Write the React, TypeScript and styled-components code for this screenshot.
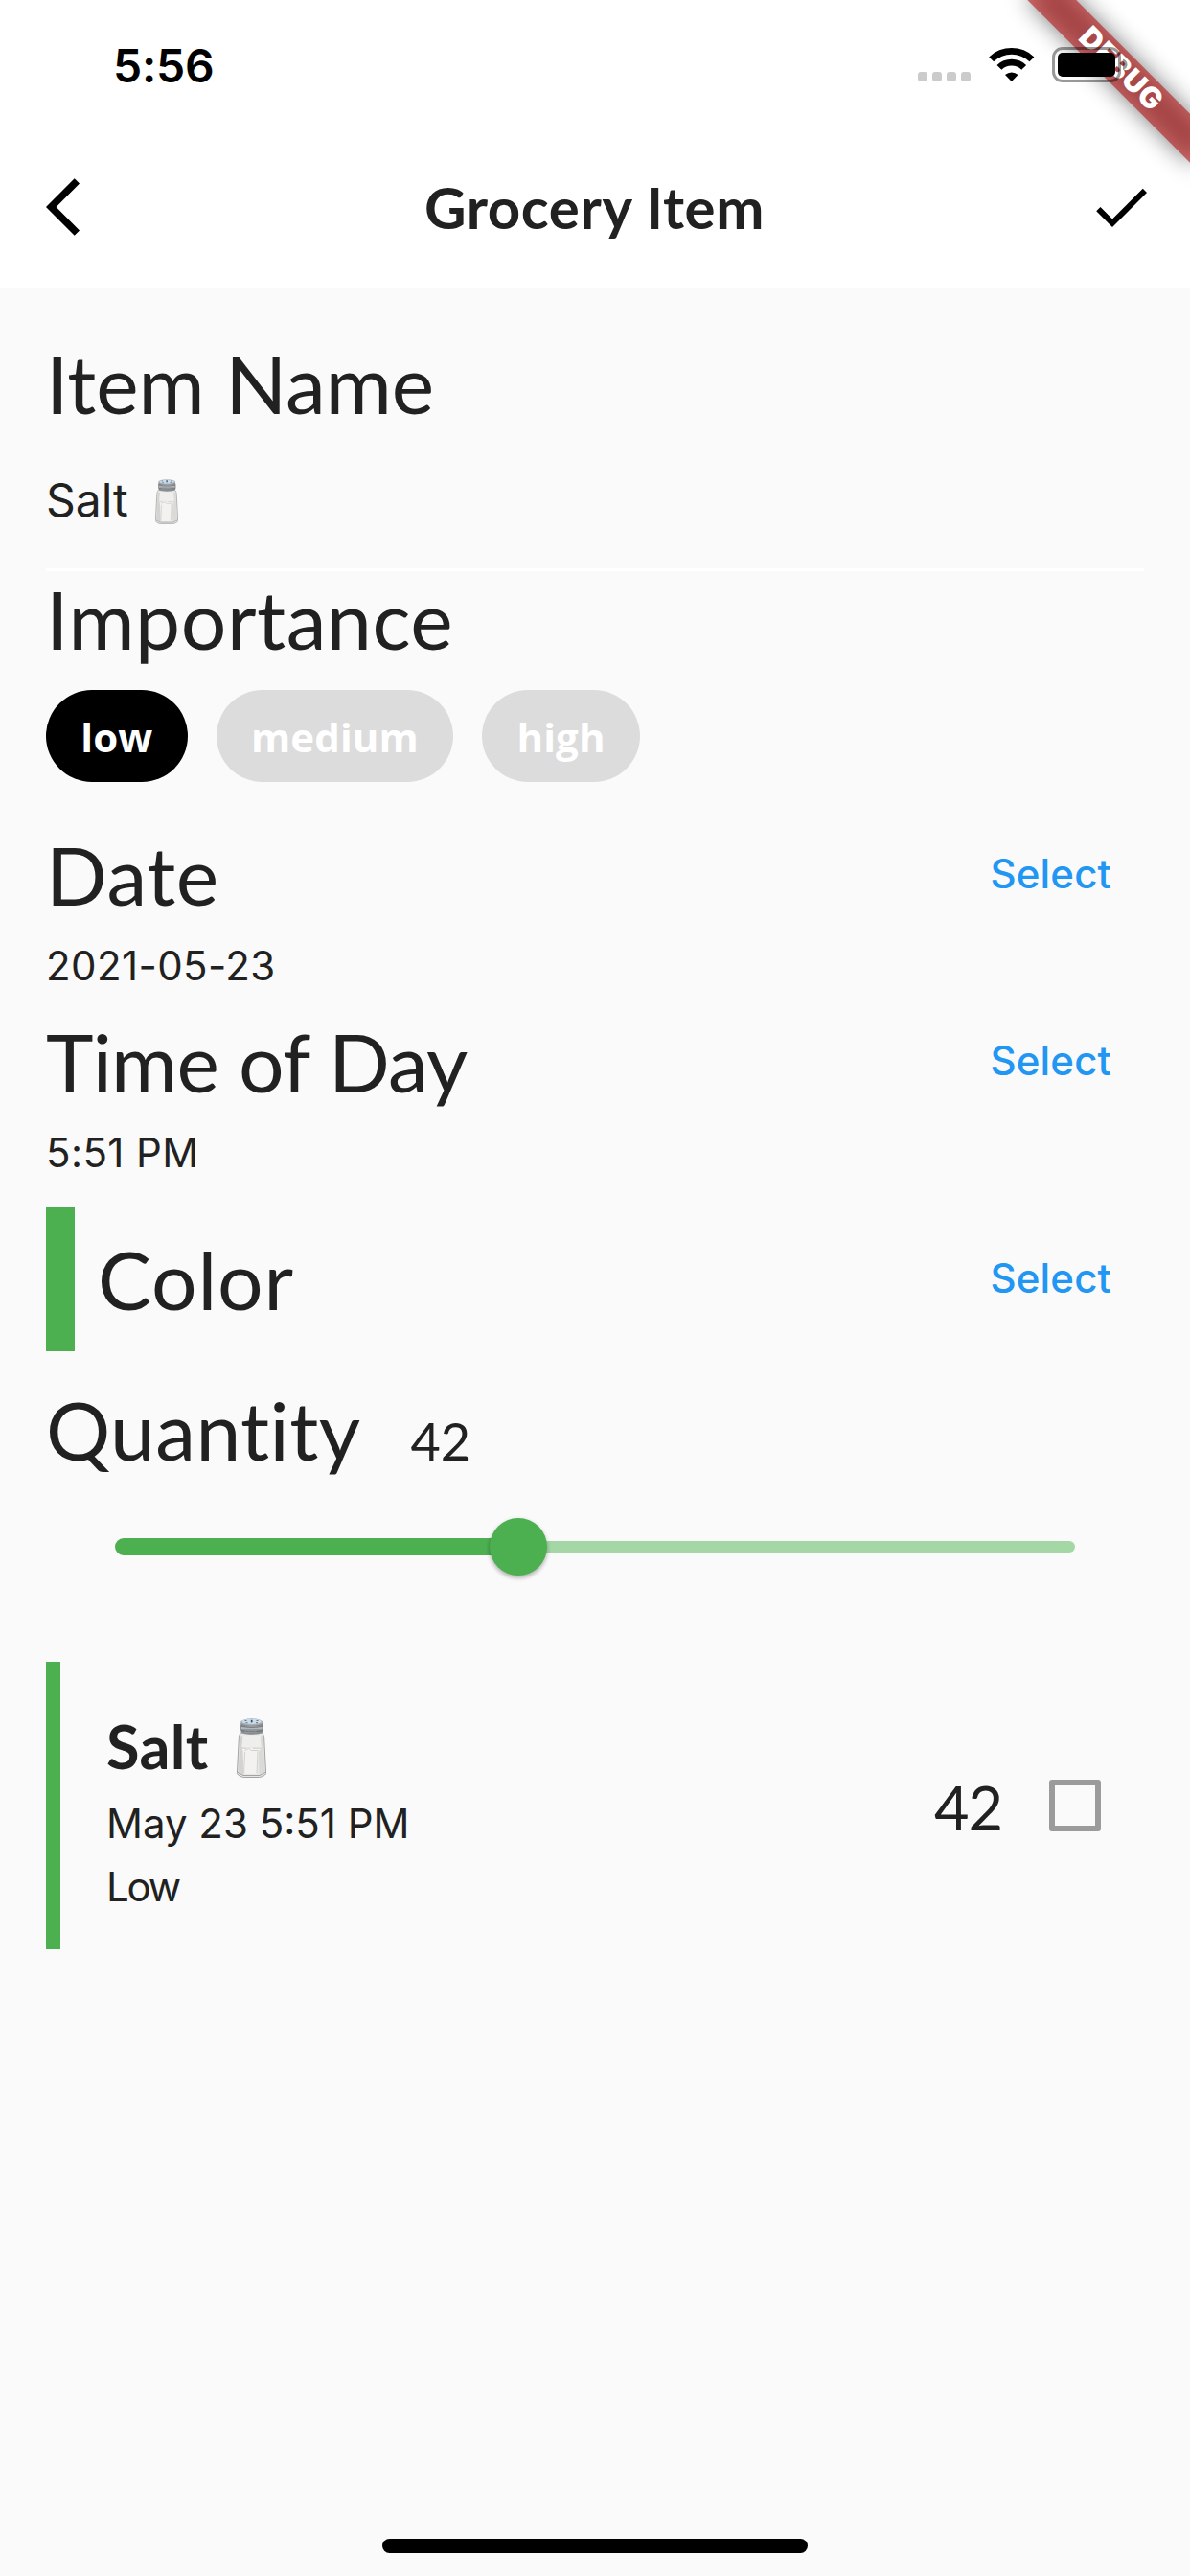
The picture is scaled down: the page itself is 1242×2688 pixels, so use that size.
import React, { useState } from 'react';
import styled, { createGlobalStyle } from 'styled-components';

const GREEN = '#4caf50';
const INK = '#212121';
const heading = `"Lato", "Open Sans", sans-serif`;
const system = `"Inter", "Roboto", sans-serif`;

const GlobalStyle = createGlobalStyle`
  *, *::before, *::after { box-sizing: border-box; }
  body { margin: 0; background: #fafafa; }
  button { border: 0; padding: 0; background: none; cursor: pointer; }
`;

const Screen = styled.div`
  position: relative;
  display: flex;
  flex-direction: column;
  width: 1242px;
  height: 2688px;
  overflow: hidden;
  background: #fafafa;
  color: ${INK};
  font-family: ${system};
`;

const Header = styled.header`
  height: 300px;
  background: #fff;
`;

const StatusBar = styled.div`
  position: relative;
  z-index: 2;
  display: flex;
  justify-content: space-between;
  height: 132px;
  padding: 0 65px 0 118px;
`;

const Clock = styled.span`
  color: #000;
  font-size: 48px;
  font-weight: 600;
  line-height: 58px;
  padding-top: 40px;
  letter-spacing: -0.2px;
`;

const StatusIcons = styled.div`
  display: flex;
  align-items: flex-start;
  padding-top: 49px;
`;

const SignalDots = styled.div`
  display: flex;
  gap: 5px;
  margin: 26px 19px 0 0;
`;

const SignalDot = styled.i`
  width: 10px;
  height: 10px;
  border-radius: 3px;
  background: #cbcbcb;
`;

const WifiIcon = styled.svg`
  width: 48px;
  height: 37px;
  margin-right: 18px;
`;

const BatteryIcon = styled.svg`
  width: 79px;
  height: 37px;
`;

const NavBar = styled.nav`
  display: grid;
  grid-template-columns: 72px 1fr 72px;
  align-items: center;
  height: 168px;
  padding: 0 36px 0 48px;
`;

const NavIcon = styled.svg`
  display: block;
  width: 72px;
  height: 72px;
  fill: #000;
`;

const NavTitle = styled.h1`
  margin: 0 13px 0 0;
  text-align: center;
  font-family: ${heading};
  font-size: 60px;
  font-weight: 700;
  line-height: 72px;
  letter-spacing: 0.6px;
`;

const BannerClip = styled.div`
  position: absolute;
  top: 0;
  right: 0;
  width: 300px;
  height: 300px;
  overflow: hidden;
  z-index: 1;
  pointer-events: none;
`;

const Banner = styled.div`
  position: absolute;
  top: 84px;
  left: 180px;
  width: 240px;
  height: 36px;
  transform-origin: 120px -84px;
  transform: rotate(45deg);

  &::before {
    content: '';
    position: absolute;
    inset: 0;
    background: rgba(0, 0, 0, 0.5);
    filter: blur(12px);
  }
`;

const BannerLabel = styled.div`
  position: relative;
  height: 36px;
  background: rgba(183, 28, 28, 0.627);
  color: #fff;
  font-size: 30.6px;
  font-weight: 900;
  line-height: 33px;
  letter-spacing: 0.5px;
  text-align: center;
`;

const Form = styled.main`
  display: flex;
  flex-direction: column;
  flex: 1;
  padding: 50px 48px 0;
`;

const Title = styled.h2<{ $spacing?: number }>`
  margin: 0;
  font-family: ${heading};
  font-size: 84px;
  font-weight: 400;
  line-height: 100px;
  letter-spacing: ${(p) => p.$spacing ?? 0}px;
  white-space: nowrap;
`;

const NameInput = styled.div`
  display: flex;
  align-items: center;
  height: 146px;
  border-bottom: 3px solid #fff;
  font-size: 48px;
  line-height: 60px;
  padding-top: 1px;
`;

const ShakerIcon = styled.svg<{ $w: number; $h: number; $left: number; $top: number }>`
  display: block;
  width: ${(p) => p.$w}px;
  height: ${(p) => p.$h}px;
  margin: ${(p) => p.$top}px 0 0 ${(p) => p.$left}px;
`;

const Chips = styled.div`
  display: flex;
  gap: 30px;
  margin: 24px 0 47px;
`;

const Chip = styled.button<{ $active: boolean }>`
  height: 96px;
  padding: 2px 36.3px 0;
  border-radius: 48px;
  background: ${(p) => (p.$active ? '#000' : '#dcdcdc')};
  color: #fff;
  font-family: "Open Sans", sans-serif;
  font-size: 42px;
  font-weight: 700;
  line-height: 94px;
  letter-spacing: 0.1px;
`;

const Row = styled.div`
  display: flex;
  align-items: center;
  justify-content: space-between;
`;

const Field = styled.section`
  margin-bottom: 25px;
`;

const FieldValue = styled.div`
  margin-top: 20px;
  font-size: 42px;
  line-height: 50px;
  letter-spacing: 0.4px;
`;

const SelectButton = styled.button`
  height: 100px;
  padding: 0 34px 4px 24px;
  color: #2196f3;
  font-family: ${system};
  font-size: 42px;
  font-weight: 500;
  letter-spacing: 0.15px;
`;

const ColorRow = styled(Row)`
  height: 150px;
  margin: 7px 0 32px;
`;

const ColorLabel = styled.div`
  display: flex;
  align-items: center;
  height: 100%;
  padding-left: 24px;
  border-left: 30px solid ${GREEN};
`;

const QuantityRow = styled.div`
  display: flex;
  align-items: baseline;
  gap: 52px;
  height: 100px;
`;

const QuantityValue = styled.span`
  font-family: ${heading};
  font-size: 54px;
  line-height: 65px;
`;

const Slider = styled.div`
  display: flex;
  align-items: center;
  height: 144px;
  margin-bottom: 48px;
  padding: 0 72px;
`;

const ActiveTrack = styled.div`
  height: 18px;
  border-radius: 9px 0 0 9px;
  background: ${GREEN};
`;

const Thumb = styled.div`
  flex: none;
  width: 60px;
  height: 60px;
  margin: 0 -30px;
  border-radius: 50%;
  background: ${GREEN};
  box-shadow: 0 3px 4px rgba(0, 0, 0, 0.22), 0 1px 5px rgba(0, 0, 0, 0.1);
  z-index: 1;
`;

const InactiveTrack = styled.div`
  flex: 1;
  height: 12px;
  border-radius: 0 6px 6px 0;
  background: #a4d6a6;
`;

const Tile = styled(Row)`
  height: 300px;
  padding: 0 45px 0 48px;
  border-left: 15px solid ${GREEN};
`;

const TileBody = styled.div`
  padding-top: 9px;
`;

const TileTitle = styled.div`
  display: flex;
  font-family: ${heading};
  font-size: 63px;
  font-weight: 700;
  line-height: 76px;
  letter-spacing: 0.3px;
`;

const TileText = styled.div<{ $top: number; $spacing?: number }>`
  margin-top: ${(p) => p.$top}px;
  font-size: 42px;
  line-height: 50px;
  letter-spacing: ${(p) => p.$spacing ?? 0}px;
`;

const TileEnd = styled.div`
  display: flex;
  align-items: center;
  gap: 49px;
`;

const TileCount = styled.span`
  padding-top: 4px;
  font-family: ${heading};
  font-size: 63px;
  line-height: 76px;
  letter-spacing: -1px;
`;

const Checkbox = styled.div`
  width: 54px;
  height: 54px;
  border: 6px solid #9b9b9b;
  border-radius: 3px;
`;

const HomeIndicator = styled.div`
  align-self: center;
  width: 444px;
  height: 15px;
  margin-bottom: 24px;
  border-radius: 8px;
  background: #000;
`;

type ShakerProps = { w: number; h: number; left: number; top: number };

function SaltShaker({ w, h, left, top }: ShakerProps) {
  return (
    <ShakerIcon viewBox="0 0 31 62" preserveAspectRatio="none" $w={w} $h={h} $left={left} $top={top} role="img" aria-label="salt shaker">
      <path d="M4.500 15h22c1.700 1.500 2 3.500 2.200 6L30.600 57.500c-1 2.300-4 3.400-7 4H7.500c-3-.6-6-1.800-7.100-4L2.300 21c.2-2.500.5-4.500 2.200-6z" fill="#e6e6e5" stroke="#a3a3a1" strokeWidth="1" />
      <path d="M3.600 19l-2 37 5.600 3L8.500 34 5.500 30l1-12z" fill="#d3d3d1" />
      <path d="M27.400 19l2 37-5.600 3L22.500 34l3-4-1-12z" fill="#dadad8" />
      <path d="M6.500 17.500h18l1 12.500h-20z" fill="#eeeeed" />
      <path d="M5 31h21l-3 3.500-1.500 23.500h-14L6.500 34z" fill="#f3f2ef" />
      <path d="M5 31.300h5.500M17 31.300h8.500M8.500 33.500l4-2 3 2h7M22 34l-1 23.500M8.600 35l-1 22.500" fill="none" stroke="#cbc9c4" strokeWidth=".8" />
      <path d="M1 56.500l6 3h17l6-3" fill="none" stroke="#a3a3a1" strokeWidth="1" />
      <path d="M4.300 5h22.900l.6 5-.6 4.500c-3 3-19.500 3-22.500 0L4 10z" fill="#878b8f" />
      <path d="M5 8.500h21.500v2.800H5z" fill="#b3b8bd" />
      <path d="M8 12.600h13v2H8z" fill="#a4a9ae" />
      <path d="M4.500 8c5 1.800 18 1.800 23 0M4.500 12.200c5 2 18 2 23 0" fill="none" stroke="#6d7175" strokeWidth=".9" />
      <ellipse cx="15.700" cy="4" rx="11.700" ry="3.700" fill="#a9adb2" />
      <ellipse cx="15.700" cy="3.400" rx="10.200" ry="2.700" fill="#c9dcee" />
      <path d="M8.500 2.500h2M20.500 2.500h2M9.500 4.700h2M20 4.700h2" stroke="#5b6b7a" strokeWidth=".9" />
      <path d="M14.800 1.800h1.700v2.600h-1.700z" fill="#3f4c59" />
    </ShakerIcon>
  );
}

const levels = ['low', 'medium', 'high'];

export default function App() {
  const [importance, setImportance] = useState('low');
  const quantity = 42;

  return (
    <>
      <GlobalStyle />
      <Screen>
        <Header>
          <StatusBar>
            <Clock>5:56</Clock>
            <StatusIcons>
              <SignalDots>
                {[0, 1, 2, 3].map((n) => <SignalDot key={n} />)}
              </SignalDots>
              <WifiIcon viewBox="0 0 48 37">
                <path d="M.2 10.400a34 34 0 0 1 47.200 0l-4.900 4.900a27 27 0 0 0-37.400 0z" />
                <path d="M8.500 18.900a22 22 0 0 1 30.600 0l-4.900 4.900a15 15 0 0 0-20.800 0z" />
                <path d="M17 28.900a10.500 10.500 0 0 1 13.600 0l-6.800 7.100z" />
              </WifiIcon>
              <BatteryIcon viewBox="0 0 79 37">
                <rect x="1.500" y="1.500" width="69" height="34" rx="9.500" fill="none" stroke="#000" strokeOpacity=".4" strokeWidth="3" />
                <rect x="6" y="6" width="60" height="25" rx="5" />
                <path d="M74 12.500c6 2 6 9.500 0 11.500z" fillOpacity=".4" />
              </BatteryIcon>
            </StatusIcons>
          </StatusBar>
          <NavBar>
            <NavIcon viewBox="0 0 24 24">
              <path d="M11.670 3.870L9.900 2.100 0 12l9.900 9.900 1.770-1.770L3.540 12z" />
            </NavIcon>
            <NavTitle>Grocery Item</NavTitle>
            <NavIcon viewBox="0 0 24 24">
              <path d="M9 16.170L4.830 12l-1.420 1.410L9 19 21 7l-1.410-1.410z" />
            </NavIcon>
          </NavBar>
        </Header>

        <BannerClip>
          <Banner>
            <BannerLabel>DEBUG</BannerLabel>
          </Banner>
        </BannerClip>

        <Form>
          <Title>Item Name</Title>
          <NameInput>
            Salt
            <SaltShaker w={24} h={47} left={28} top={2} />
          </NameInput>

          <Title $spacing={0.55}>Importance</Title>
          <Chips>
            {levels.map((level) => (
              <Chip key={level} $active={level === importance} onClick={() => setImportance(level)}>
                {level}
              </Chip>
            ))}
          </Chips>

          <Field>
            <Row>
              <Title $spacing={0.6}>Date</Title>
              <SelectButton>Select</SelectButton>
            </Row>
            <FieldValue>2021-05-23</FieldValue>
          </Field>

          <Field>
            <Row>
              <Title $spacing={-0.7}>Time of Day</Title>
              <SelectButton>Select</SelectButton>
            </Row>
            <FieldValue>5:51 PM</FieldValue>
          </Field>

          <ColorRow>
            <ColorLabel>
              <Title $spacing={0.8}>Color</Title>
            </ColorLabel>
            <SelectButton>Select</SelectButton>
          </ColorRow>

          <QuantityRow>
            <Title $spacing={0.4}>Quantity</Title>
            <QuantityValue>{quantity}</QuantityValue>
          </QuantityRow>
          <Slider>
            <ActiveTrack style={{ width: `${quantity}%` }} />
            <Thumb />
            <InactiveTrack />
          </Slider>

          <Tile>
            <TileBody>
              <TileTitle>
                Salt
                <SaltShaker w={31} h={62} left={30} top={9} />
              </TileTitle>
              <TileText $top={18}>May 23 5:51 PM</TileText>
              <TileText $top={16} $spacing={-2.2}>Low</TileText>
            </TileBody>
            <TileEnd>
              <TileCount>{quantity}</TileCount>
              <Checkbox />
            </TileEnd>
          </Tile>
        </Form>
        <HomeIndicator />
      </Screen>
    </>
  );
}
